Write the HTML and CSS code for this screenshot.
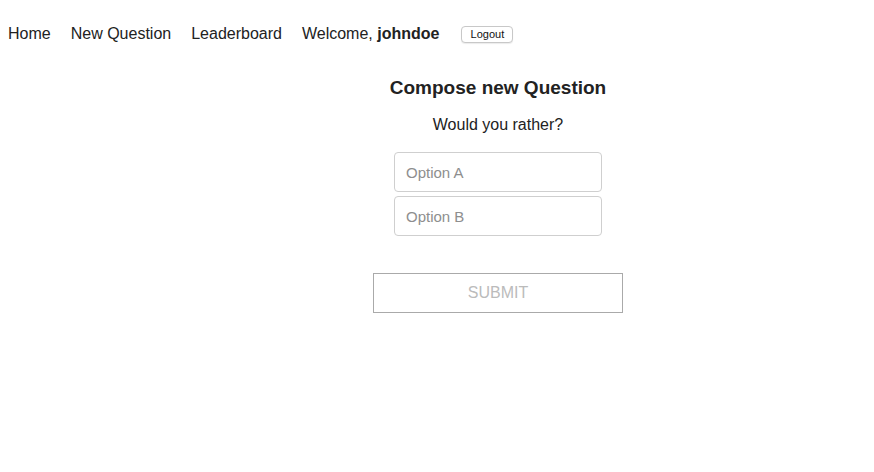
FILE: index.html
```html
<!DOCTYPE html>
<html>
<head>
<meta charset="utf-8">
<link rel="stylesheet" href="styles.css">
</head>
<body>
<nav class="nav">
  <a class="nav-link" href="#">Home</a>
  <a class="nav-link" href="#">New Question</a>
  <a class="nav-link" href="#">Leaderboard</a>
  <span class="nav-user">Welcome, <b>johndoe</b></span>
  <button class="logout">Logout</button>
</nav>
<main class="main">
  <h2 class="title">Compose new Question</h2>
  <p class="subtitle">Would you rather?</p>
  <form class="form">
    <input class="field" type="text" placeholder="Option A">
    <input class="field" type="text" placeholder="Option B">
    <button class="submit" type="button" disabled>SUBMIT</button>
  </form>
</main>
</body>
</html>
```
FILE: styles.css
```css
html, body {
  margin: 0;
  padding: 0;
  background: #fff;
}
body {
  font-family: "Liberation Sans", Arial, sans-serif;
  color: #222;
}
.nav {
  display: flex;
  align-items: center;
  height: 18px;
  padding: 25px 8px 0 8px;
  font-size: 16px;
}
.nav-link {
  color: #222;
  text-decoration: none;
  margin-right: 20px;
}
.nav-user {
  margin-right: 22px;
}
.nav-user b {
  font-weight: bold;
}
.logout {
  font-family: "Liberation Sans", Arial, sans-serif;
  font-size: 11px;
  color: #111;
  background: #fff;
  border: 1px solid #c8c8c8;
  border-radius: 4px;
  height: 17px;
  width: 52px;
  padding: 0;
  box-shadow: 0 1px 1px rgba(0,0,0,0.08);
}
.main {
  display: flex;
  flex-direction: column;
  align-items: center;
  padding-left: 122px;
  padding-top: 33px;
}
.title {
  margin: 0;
  font-size: 19px;
  font-weight: bold;
  line-height: 23px;
}
.subtitle {
  margin: 16px 0 0 0;
  font-size: 16px;
  line-height: 20px;
}
.form {
  display: flex;
  flex-direction: column;
  align-items: center;
  margin-top: 17px;
}
.field {
  box-sizing: border-box;
  width: 208px;
  height: 40px;
  border: 1px solid #cfcfcf;
  border-radius: 4px;
  padding: 0 11px;
  font-family: "Liberation Sans", Arial, sans-serif;
  font-size: 15px;
  margin-bottom: 4px;
  outline: none;
}
.field::placeholder {
  color: #8e8e8e;
}
.submit {
  box-sizing: border-box;
  width: 250px;
  height: 40px;
  margin-top: 33px;
  background: #fff;
  border: 1px solid #aaa;
  color: #bbb;
  font-family: "Liberation Sans", Arial, sans-serif;
  font-size: 16px;
}
```
